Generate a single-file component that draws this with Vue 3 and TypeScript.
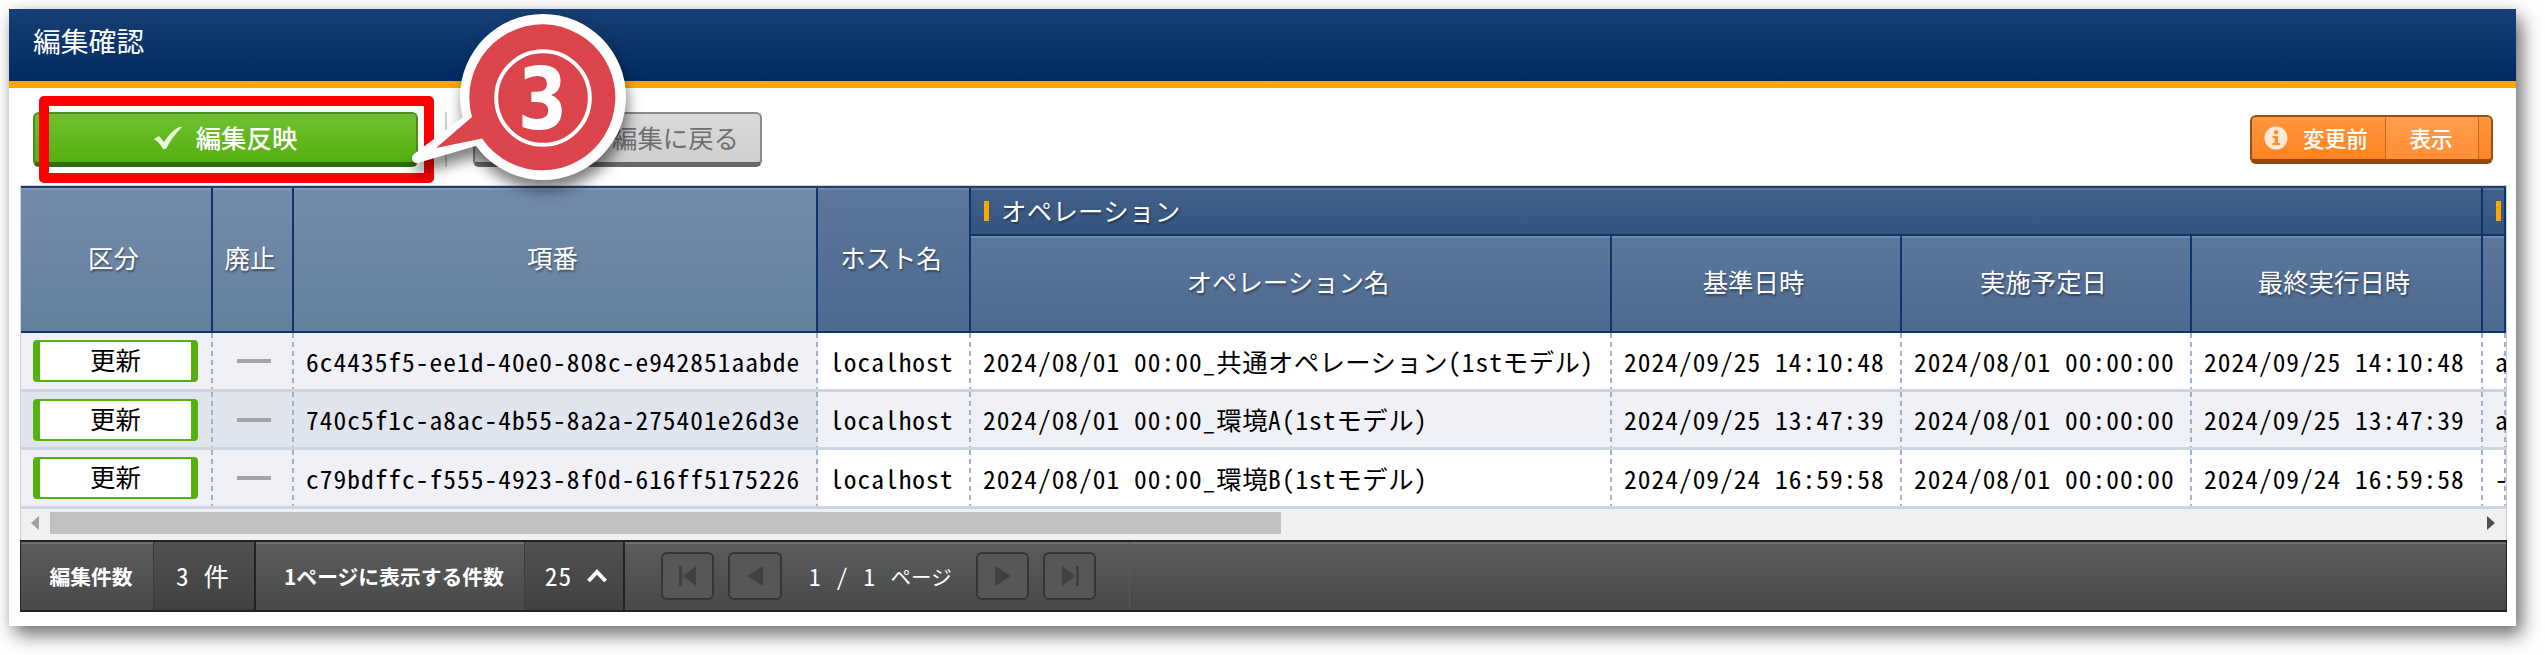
<script setup lang="ts">
interface Row {
  id: string
  operation: string
  base: string
  plan: string
  last: string
  next: string
}
interface Run {
  text: string
  half: boolean
}

const rows: Row[] = [
  { id: '6c4435f5-ee1d-40e0-808c-e942851aabde', operation: '2024/08/01 00:00_共通オペレーション(1stモデル)', base: '2024/09/25 14:10:48', plan: '2024/08/01 00:00:00', last: '2024/09/25 14:10:48', next: 'a' },
  { id: '740c5f1c-a8ac-4b55-8a2a-275401e26d3e', operation: '2024/08/01 00:00_環境A(1stモデル)', base: '2024/09/25 13:47:39', plan: '2024/08/01 00:00:00', last: '2024/09/25 13:47:39', next: 'a' },
  { id: 'c79bdffc-f555-4923-8f0d-616ff5175226', operation: '2024/08/01 00:00_環境B(1stモデル)', base: '2024/09/24 16:59:58', plan: '2024/08/01 00:00:00', last: '2024/09/24 16:59:58', next: '-' },
]
const subHeads = ['オペレーション名', '基準日時', '実施予定日', '最終実行日時']

// Splits a value into half-width and full-width runs.
function runs(value: string): Run[] {
  return (value.match(/[\x20-\x7e]+|[^\x20-\x7e]+/g) ?? []).map((text) => ({
    text,
    half: /^[\x20-\x7e]/.test(text),
  }))
}
function cells(row: Row): string[] {
  return [row.id, 'localhost', row.operation, row.base, row.plan, row.last, row.next]
}
</script>

<template>
  <div class="page-root">
    <div class="window">
      <header class="title">編集確認</header>
      <div class="toolbar">
        <button class="btn apply">
          <svg width="30" height="24" viewBox="0 0 30 24"><path d="M1 13 L6 10 L11 16 Q17 6 26 1 L29 1 Q19 11 13 23 L10 23 Q7 17 1 13Z" fill="#e9f7dc" /></svg>
          <span>編集反映</span>
        </button>
        <i class="sep"></i>
        <button class="btn back">編集に戻る</button>
        <button class="btn before">
          <span class="before-label">
            <svg width="24" height="24" viewBox="0 0 24 24"><circle cx="12" cy="12" r="11.5" fill="#ffe9d8" /><circle cx="12" cy="6.3" r="2.2" fill="#ff8c2c" /><path d="M8.5 10H14V17H16V19H8.5V17H10.5V12H8.5Z" fill="#ff8c2c" /></svg>
            変更前
          </span>
          <span class="before-show">表示</span>
          <span class="before-end"></span>
        </button>
      </div>

      <div class="table">
        <div class="head cols">
          <div class="th fixed tall">区分</div>
          <div class="th fixed tall">廃止</div>
          <div class="th fixed tall">項番</div>
          <div class="th tall">ホスト名</div>
          <div class="th group span4"><i></i>オペレーション</div>
          <div class="th group"><i></i></div>
          <div v-for="h in subHeads" :key="h" class="th">{{ h }}</div>
          <div class="th"></div>
        </div>
        <div v-for="(row, n) in rows" :key="row.id" class="row cols" :class="{ even: n === 1 }">
          <div class="td fixed kind"><span class="badge">更新</span></div>
          <div class="td fixed none"><i></i></div>
          <div v-for="(value, c) in cells(row)" :key="c" class="td" :class="{ fixed: c === 0 }">
            <span v-for="(run, r) in runs(value)" :key="r" :class="run.half ? 'half' : 'full'">{{ run.text }}</span>
          </div>
        </div>
        <div class="scroll">
          <svg width="10" height="14" viewBox="0 0 10 14"><path d="M9 0V14L1 7Z" fill="#a0a0a0" /></svg>
          <div class="thumb"></div>
          <svg class="arrow-right" width="10" height="14" viewBox="0 0 10 14"><path d="M1 0V14L9 7Z" fill="#505050" /></svg>
        </div>
      </div>

      <footer class="footer">
        <div class="seg s1">編集件数</div>
        <div class="seg val s2"><span class="half">3 </span>件</div>
        <div class="seg s3">1ページに表示する件数</div>
        <div class="seg val s4">
          <span class="half">25</span>
          <svg width="22" height="14" viewBox="0 0 22 14"><path d="M2.5 12L11 3L19.5 12" fill="none" stroke="#fff" stroke-width="4" /></svg>
        </div>
        <div class="pager">
          <span class="pg"><svg width="20" height="22" viewBox="0 0 20 22"><path d="M1 1H4V21H1ZM18 1V21L5 11Z" /></svg></span>
          <span class="pg prev"><svg width="20" height="22" viewBox="0 0 20 22"><path d="M18 1V21L2 11Z" /></svg></span>
          <span class="page"><span class="half">1 / 1 </span><span class="unit">ページ</span></span>
          <span class="pg"><svg width="20" height="22" viewBox="0 0 20 22"><path d="M2 1V21L18 11Z" /></svg></span>
          <span class="pg"><svg width="20" height="22" viewBox="0 0 20 22"><path d="M2 1V21L15 11ZM16 1H19V21H16Z" /></svg></span>
        </div>
      </footer>
    </div>

    <div class="marker"></div>
    <svg class="callout" width="300" height="200" viewBox="400 0 300 200">
      <path d="M471.5 117 A74 74 0 1 1 482 139 L417 158 Z" fill="#fff" stroke="#fff" stroke-width="10" stroke-linejoin="round" />
      <circle cx="543" cy="97" r="83" fill="#fff" />
      <path d="M472 117 A73 73 0 1 1 482 138.500 L436 148 Z" fill="#db444b" />
      <circle cx="543" cy="98" r="46.800" fill="none" stroke="#fff" stroke-width="4" />
      <text transform="translate(542.500 129) scale(0.84 1)" text-anchor="middle">3</text>
    </svg>
  </div>
</template>

<style>
body { margin: 0; background: #fff; }
</style>
<style scoped>
.page-root {
  position: relative;
  box-sizing: border-box;
  width: 2545px;
  height: 655px;
  padding: 9px 0 0 9px;
  overflow: hidden;
  background: #fff;
}
.window {
  box-sizing: border-box;
  width: 2507px;
  height: 617px;
  background: #fff;
  box-shadow: 6px 9px 18px rgba(0, 0, 0, 0.55), 0 0 12px rgba(0, 0, 0, 0.08);
  font-family: "Noto Sans CJK JP", sans-serif;
  font-size: 25.4px;
  line-height: 1;
}
.title {
  box-sizing: border-box;
  height: 79px;
  padding: 18px 24px 0;
  color: #fff;
  font-size: 27.8px;
  border-bottom: 7px solid #ffa500;
  background: linear-gradient(#173f73, #002b62);
}
.toolbar { box-sizing: border-box; display: flex; align-items: flex-start; height: 97px; padding: 24px 23px 0 24px; }
.btn {
  box-sizing: border-box;
  display: flex;
  align-items: center;
  justify-content: center;
  height: 55px;
  margin: 0;
  padding: 0;
  border-radius: 6px;
  font: inherit;
}
.apply {
  gap: 13px;
  width: 385px;
  padding-right: 1px;
  color: #fff;
  font-size: 25.4px;
  font-weight: 500;
  border: 2px solid #4c8c20;
  border-bottom: 5px solid #2f6d08;
  background: linear-gradient(#70c030, #55b010);
}
.sep { width: 2px; height: 55px; margin: 0 26px 0 27px; background: #ccc; }
.back {
  justify-content: flex-end;
  width: 289px;
  padding-right: 21px;
  color: #707070;
  border: 2px solid #8b8b8b;
  border-bottom: 5px solid #666;
  background: linear-gradient(#dadada, #cfcfcf);
}
.before {
  width: 243px;
  height: 49px;
  margin: 3px 0 0 auto;
  color: #fff;
  font-size: 21.6px;
  font-weight: 500;
  align-items: stretch;
  border: 2px solid #95501c;
  border-bottom: 5px solid #954708;
  background: linear-gradient(#ff963f, #ff8420);
  overflow: hidden;
}
.before-label { display: flex; align-items: center; gap: 15px; width: 133px; box-sizing: border-box; padding-left: 12px; }
.before-show { display: flex; align-items: center; justify-content: center; flex: 1; padding-right: 2px; border: solid #c76a22; border-width: 0 1px; background: linear-gradient(#ff9e50, #ff8e34); }
.before-end { width: 12px; }

.table {
  box-sizing: border-box;
  width: 2487px;
  height: 355px;
  margin-left: 11px;
  border: 1px solid #cfd2d6;
  border-bottom: 0;
  overflow: hidden;
  background: #f0f0f0;
}
.cols { display: grid; grid-template-columns: 192px 81px 524px 153px 641px 290px 290px 291px 23px; }
.head { grid-template-rows: 48px 97px; border-top: 2px solid #1b4071; }
.th {
  display: flex;
  align-items: center;
  justify-content: center;
  box-sizing: border-box;
  min-width: 0;
  padding: 0 5px 3px 0;
  color: #fff;
  white-space: nowrap;
  text-shadow: 1px 2px 2px rgba(0, 0, 0, 0.4);
  border-right: 2px solid #0d356a;
  border-bottom: 2px solid #0d356a;
  background: linear-gradient(#5c779c, #4c698f);
  box-shadow: inset 0 2px rgba(255, 255, 255, 0.13);
}
.tall { grid-row: 1 / 3; }
.th.fixed { background: linear-gradient(#738bab, #65809f); }
.th.group { justify-content: flex-start; padding: 0 0 0 13px; letter-spacing: 0.3px; background: linear-gradient(#426189, #335480); }
.span4 { grid-column: 5 / 9; }
.group i { width: 5px; height: 20px; margin-right: 12px; background: #ffa500; flex: none; }
.row { height: 58.500px; background: #fff; }
.td {
  display: flex;
  align-items: center;
  box-sizing: border-box;
  min-width: 0;
  padding: 1px 0 0 12px;
  color: #000;
  white-space: pre;
  border-bottom: 3px solid #cbd6e2;
  background: repeating-linear-gradient(#a0b1ca 0 5px, transparent 5px 9px) right / 2px 100% no-repeat;
}
.td.fixed { background-color: #eff1f6; }
.even { background: #eff1f6; }
.even .td.fixed { background-color: #e0e5ed; }
.half { font-feature-settings: "hwid"; letter-spacing: 1.030px; white-space: pre; }
.full { letter-spacing: 0.4px; }
.td.kind { padding-left: 12px; }
.badge {
  box-sizing: border-box;
  display: flex;
  justify-content: center;
  width: 165px;
  height: 42px;
  padding-top: 5px;
  border: solid #53b20d;
  border-width: 2px 7px;
  border-radius: 4px;
  background: #fff;
}
.td.none { justify-content: center; padding-left: 0; }
.none i { width: 34px; height: 4px; background: #a4a4a4; }
.scroll { display: flex; align-items: center; height: 27px; padding: 1px 10px 0 9px; }
.thumb { width: 1231px; height: 22px; margin-left: 10px; background: #c1c1c1; }
.arrow-right { margin-left: auto; }

.footer {
  box-sizing: border-box;
  display: flex;
  width: 2487px;
  height: 72px;
  margin-left: 11px;
  color: #fff;
  border: 1px solid #222;
  border-width: 2px 1px;
  background: linear-gradient(#5b5d5c, #484a49);
  box-shadow: inset 0 2px #6d6f6e;
}
.seg { display: flex; align-items: center; justify-content: center; box-sizing: border-box; font-size: 20.8px; font-weight: 700; white-space: pre; border-right: 1px solid #3c3e3d; }
.s1 { width: 133px; padding-left: 8px; }
.s2 { width: 102px; padding-right: 3px; }
.s3 { width: 269px; padding-left: 8px; }
.s4 { width: 100px; gap: 14px; padding-left: 5px; }
.val { font-size: 25.4px; font-weight: 400; border-right: 2px solid #222; background: linear-gradient(#505251, #404241); }
.pager { display: flex; align-items: center; padding-left: 36px; width: 505px; box-sizing: border-box; border-right: 1px solid #585a59; }
.pg { box-sizing: border-box; display: flex; align-items: center; justify-content: center; width: 53px; height: 48px; margin-right: 14px; border: 2px solid #353736; border-radius: 6px; background: #565857; }
.pg svg { fill: #404241; }
.prev { width: 54px; margin-right: 27px; }
.page { display: flex; align-items: center; width: 167px; font-size: 23px; }
.page .half { letter-spacing: 2.100px; }
.page .unit { font-size: 20.5px; }

.marker { position: absolute; left: 39px; top: 96px; box-sizing: border-box; width: 395px; height: 87px; border: 10px solid #f00; border-radius: 5px; }
.callout { position: absolute; left: 400px; top: 0; overflow: visible; filter: drop-shadow(2px 10px 7px rgba(0, 0, 0, 0.5)); }
.callout text { font-family: "DejaVu Sans", sans-serif; font-size: 85px; font-weight: 700; fill: #fff; }
</style>
